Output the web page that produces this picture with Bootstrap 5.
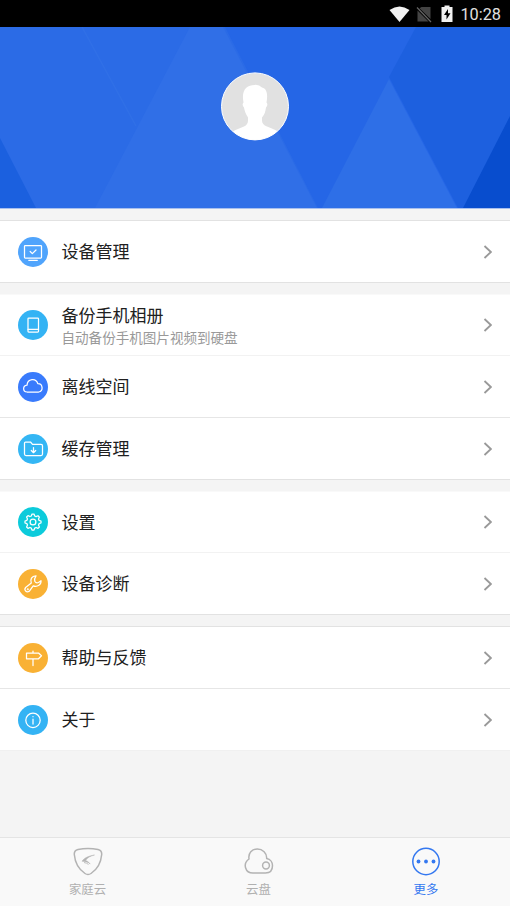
<!DOCTYPE html>
<html lang="zh-CN">
<head>
<meta charset="utf-8">
<meta name="viewport" content="width=device-width, initial-scale=1">
<title>更多</title>
<link rel="stylesheet" href="https://cdn.jsdelivr.net/npm/bootstrap@5.3.0/dist/css/bootstrap.min.css">
<style>
body{font-family:"Noto Sans CJK SC","Noto Sans",sans-serif;background:#f4f4f4;color:#202020;height:906px;overflow:hidden}
svg{display:block;flex:none}
.status-bar{height:27px;background:#000;color:#e0e0e0;font:400 16.3px/27px Roboto,sans-serif;padding:1px 9px 0 0}
.hero{height:182px;background:#2566e6;border-bottom:1px solid #a9c0ee;display:grid}
.hero>*{grid-area:1/1}
.avatar{margin-top:44px;justify-self:center}
.menu-list{padding-top:11px}
.menu-group{background:#fff;border-top:1px solid #e2e2e2;border-bottom:1px solid #e2e2e2;margin-bottom:11px}
.menu-group.soft-top{border-top-color:#f9f9f9}
.menu-group.soft-bottom{border-bottom-color:#f0f0f0}
.entry{height:61px;padding:0 18px;font-size:17px;line-height:25px;color:inherit;text-decoration:none}
.entry+.entry{height:62px;border-top:1px solid #e6e6e6}
.entry.soft{border-top-color:#f2f2f2!important}
.entry.short{height:60px}
.entry small{font-size:13.55px;line-height:20px;color:#999}
.entry .label{margin-left:13.5px;padding-bottom:2px}
.ic{fill:none;stroke:#fff;stroke-width:1.25;stroke-linecap:round;stroke-linejoin:round}
.tabs{height:69px;background:#f9f9f9;border-top:1px solid #e4e4e4;display:grid;grid-template-columns:175px 167px 168px}
.tabs a{color:#b0b0b0;font-size:12.4px;line-height:18px;text-decoration:none;padding-top:9px}
.tabs a.current{color:#3478f0}
.tabs span{margin-top:4px}
</style>
<script src="https://cdn.jsdelivr.net/npm/bootstrap@5.3.0/dist/js/bootstrap.bundle.min.js"></script>
</head>
<body class="d-flex flex-column">
<header class="status-bar d-flex align-items-center justify-content-end">
  <svg width="72" height="27" viewBox="388.500 0.500 72 27">
    <path d="M390 9.500Q400 2.500 410 9.500L400 21.500Z" fill="#f2f2f2"/>
    <path d="M422 6.500H431V18.500L420 7.800Z" fill="#444"/><path d="M418 10L429 21H418Z" fill="#444"/>
    <path d="M417.500 7L431.500 21.500" stroke="#666" stroke-width="1.200"/>
    <path d="M442 6.500H445V5H450V6.500H453V21.500H442Z" fill="#f2f2f2"/>
    <path d="M448.500 8.500L444.500 14.500H447V19L451 12.800H448.500Z" fill="#000"/>
  </svg>
  <span>10:28</span>
</header>
<section class="hero">
  <svg width="510" height="181" viewBox="0 27 510 181">
    <path d="M0 27H225L318 208H0Z" fill="#2b6be6"/>
    <path d="M190 27H223L317 208H95Z" fill="#306fe7"/>
    <path d="M82 27L136 126" stroke="#3473e8" stroke-width="1.500" opacity=".6"/>
    <path d="M0 138L36 208H0Z" fill="#1b60df"/>
    <path d="M416 27H510V208H458L389 77Z" fill="#1d60df"/>
    <path d="M389 79L457 208H322Z" fill="#2e6fe7"/>
    <path d="M510 116V208H463Z" fill="#084dce"/>
  </svg>
  <svg class="avatar" width="70" height="70" viewBox="0 -0.400 70 70">
    <defs><clipPath id="face"><circle cx="35" cy="35" r="33.500"/></clipPath></defs>
    <circle cx="35" cy="35" r="33.500" fill="#e1e1e1"/>
    <path clip-path="url(#face)" fill="#fff" d="M8 63Q15 58 24 55Q28 53 28 49V46C25.500 42 24.500 39 24 36Q21.500 33 23.500 31C21 18 27 13.500 34.500 13.500Q39 13 42 16C47 17 48 23 46.500 31Q48.500 33 46 36C45.500 40 44.500 43 42 46V49Q42 53 47 55Q56 58 62 63V70H8Z"/>
    <circle cx="35" cy="35" r="33.500" fill="none" stroke="#fff"/>
  </svg>
</section>
<main class="menu-list flex-grow-1">
  <div class="menu-group">
    <a class="entry d-flex align-items-center">
      <svg class="ic" width="30" height="30" viewBox="0 0 30 30"><circle cx="15" cy="15" r="15" fill="#50a4fc" stroke="none"/><rect x="6.500" y="8.500" width="17" height="12.500" rx=".8"/><path d="M12.200 14.500l2.100 2.100 3.700-3.600M10.800 23.300h8.500"/></svg>
      <span class="label flex-grow-1">设备管理</span>
      <svg width="9" height="14" viewBox="0 0 9 14"><path d="M1.500 1L7.900 7L1.500 13" fill="none" stroke="#999" stroke-width="1.800"/></svg>
    </a>
  </div>
  <div class="menu-group soft-top">
    <a class="entry short d-flex align-items-center">
      <svg class="ic" width="30" height="30" viewBox="0 0 30 30"><circle cx="15" cy="15" r="15" fill="#34b3f4" stroke="none"/><rect x="10" y="8" width="10.500" height="14" rx=".8"/><path d="M10 19.300h10.500"/></svg>
      <span class="label flex-grow-1 d-flex flex-column">备份手机相册<small>自动备份手机图片视频到硬盘</small></span>
      <svg width="9" height="14" viewBox="0 0 9 14"><path d="M1.500 1L7.900 7L1.500 13" fill="none" stroke="#999" stroke-width="1.800"/></svg>
    </a>
    <a class="entry soft d-flex align-items-center">
      <svg class="ic" width="30" height="30" viewBox="0 0 30 30"><circle cx="15" cy="15" r="15" fill="#397bfc" stroke="none"/><path d="M9 20C4.500 19.500 4.500 13.800 9 13.200C9.500 6.500 18 5.500 19.800 11.700C24.800 11.500 25.800 19 20.700 20Z"/></svg>
      <span class="label flex-grow-1">离线空间</span>
      <svg width="9" height="14" viewBox="0 0 9 14"><path d="M1.500 1L7.900 7L1.500 13" fill="none" stroke="#999" stroke-width="1.800"/></svg>
    </a>
    <a class="entry d-flex align-items-center">
      <svg class="ic" width="30" height="30" viewBox="0 0 30 30"><circle cx="15" cy="15" r="15" fill="#34b6f4" stroke="none"/><path d="M7.500 8H12.500L14.500 10.300H23Q24.500 10.300 24.500 11.800V20Q24.500 21.500 23 21.500H8Q6.500 21.500 6.500 20V9Q6.500 8 7.500 8ZM15.500 13.500V18.500M13.300 16.500L15.500 18.700L17.700 16.500"/></svg>
      <span class="label flex-grow-1">缓存管理</span>
      <svg width="9" height="14" viewBox="0 0 9 14"><path d="M1.500 1L7.900 7L1.500 13" fill="none" stroke="#999" stroke-width="1.800"/></svg>
    </a>
  </div>
  <div class="menu-group soft-top">
    <a class="entry short d-flex align-items-center">
      <svg class="ic" width="30" height="30" viewBox="0 0 30 30"><circle cx="15" cy="15" r="15" fill="#0ccbdb" stroke="none"/><circle cx="15" cy="15" r="2.900"/><path d="M13.300 9L14 7H16L16.700 9L18.100 9.600L20 8.700L21.400 10.100L20.500 12L21.100 13.400L23 14V16L21.100 16.700L20.500 18.100L21.400 20L20 21.400L18.100 20.500L16.700 21.100L16 23H14L13.300 21.100L11.900 20.500L10 21.400L8.600 20L9.500 18.100L8.900 16.700L7 16V14L8.900 13.300L9.500 11.900L8.600 10L10 8.600L11.900 9.500Z"/></svg>
      <span class="label flex-grow-1">设置</span>
      <svg width="9" height="14" viewBox="0 0 9 14"><path d="M1.500 1L7.900 7L1.500 13" fill="none" stroke="#999" stroke-width="1.800"/></svg>
    </a>
    <a class="entry soft d-flex align-items-center">
      <svg class="ic" width="30" height="30" viewBox="0 0 30 30"><circle cx="15" cy="15" r="15" fill="#f9b134" stroke="none"/><path d="M18 6.800C13.500 7 12 10.500 13.300 14L7.600 18.500C5.600 21 8.500 24 11.200 22.300L15.200 16.900C19.500 18.500 23.500 15.500 23 11.700L20.500 13.500Q18 14.500 16.800 12.200Q16 10 18 6.800Z"/><circle cx="9.800" cy="20.300" r=".4"/></svg>
      <span class="label flex-grow-1">设备诊断</span>
      <svg width="9" height="14" viewBox="0 0 9 14"><path d="M1.500 1L7.900 7L1.500 13" fill="none" stroke="#999" stroke-width="1.800"/></svg>
    </a>
  </div>
  <div class="menu-group soft-bottom mb-0">
    <a class="entry d-flex align-items-center">
      <svg class="ic" width="30" height="30" viewBox="0 0 30 30"><circle cx="15" cy="15" r="15" fill="#f9b134" stroke="none"/><path d="M8.500 10H20.500L23.500 12.800L20.500 15.800H8.500ZM15 8V10M15 15.800V22.500"/></svg>
      <span class="label flex-grow-1">帮助与反馈</span>
      <svg width="9" height="14" viewBox="0 0 9 14"><path d="M1.500 1L7.900 7L1.500 13" fill="none" stroke="#999" stroke-width="1.800"/></svg>
    </a>
    <a class="entry d-flex align-items-center">
      <svg class="ic" width="30" height="30" viewBox="0 0 30 30"><circle cx="15" cy="15" r="15" fill="#34b3f4" stroke="none"/><circle cx="15" cy="15.300" r="7.200"/><path d="M15 14.200V19M15 11.600V11.700"/></svg>
      <span class="label flex-grow-1">关于</span>
      <svg width="9" height="14" viewBox="0 0 9 14"><path d="M1.500 1L7.900 7L1.500 13" fill="none" stroke="#999" stroke-width="1.800"/></svg>
    </a>
  </div>
</main>
<nav class="tabs">
  <a class="d-flex flex-column align-items-center">
    <svg width="30" height="29" viewBox="0 0 30 29" fill="none" stroke="#b3b3b3" stroke-width="1.500"><path d="M5 2.500Q15 .5 25 2.500Q29 3.500 28.700 7.500C28 15.500 24 22.500 18 26.500Q15 28.500 12 26.500C6 22.500 2 15.500 1.300 7.500Q1 3.500 5 2.500Z"/><path d="M21.500 8C15 9 11.500 11 9 14.200C12.500 14.300 15 15 17.200 17C15.500 14.500 13.500 13.800 12.500 13.500C14.500 10.500 17.500 9 21.500 8Z" fill="#b3b3b3" stroke-width=".5"/><path d="M11 15.500Q14 16 15.500 17.500" stroke-width=".8"/></svg>
    <span>家庭云</span>
  </a>
  <a class="d-flex flex-column align-items-center">
    <svg width="30" height="29" viewBox="0 0 30 29" fill="none" stroke="#b3b3b3" stroke-width="1.500"><path d="M5 12C4 6 8 2 13.300 2S23 6 22.700 11.500C26.500 12.200 28.500 15.500 28.500 18.500Q28.500 26 21.500 26H9C1 26 -1.500 16.500 5 12Z"/><circle cx="22" cy="18.500" r="3.400"/></svg>
    <span>云盘</span>
  </a>
  <a class="current d-flex flex-column align-items-center">
    <svg width="30" height="29" viewBox="0 0 30 29"><circle cx="15" cy="14.500" r="13.200" fill="none" stroke="#3478f0" stroke-width="1.500"/><g fill="#3478f0"><circle cx="7.500" cy="14.500" r="1.900"/><circle cx="15" cy="14.500" r="1.900"/><circle cx="22.500" cy="14.500" r="1.900"/></g></svg>
    <span>更多</span>
  </a>
</nav>
</body>
</html>
